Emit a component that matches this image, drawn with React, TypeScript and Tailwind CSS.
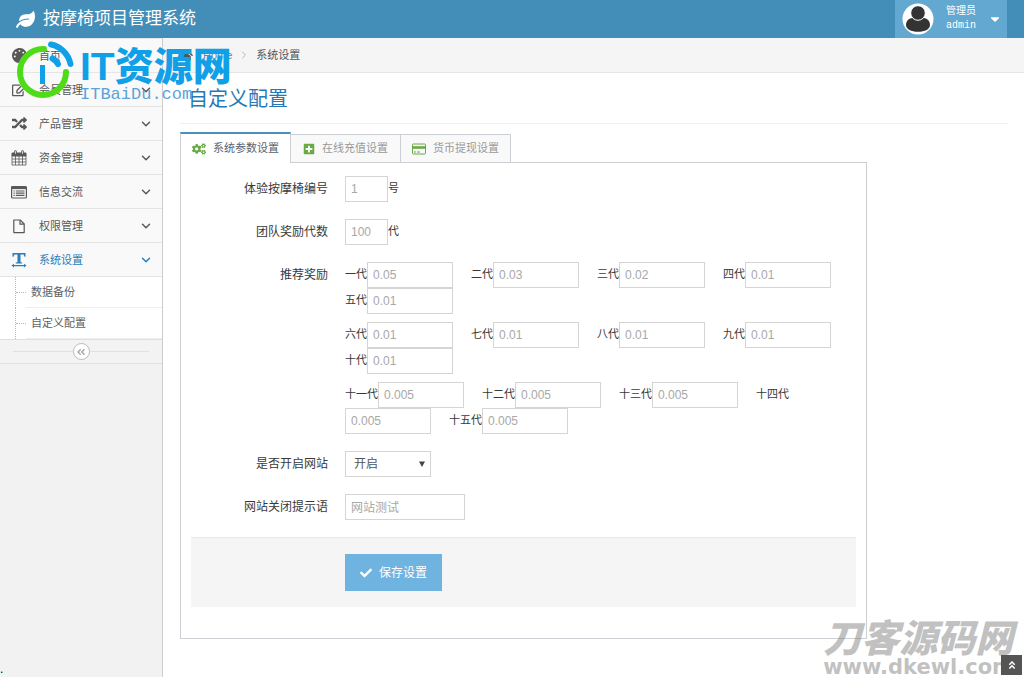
import React, { useState } from 'react';
import { FaLeaf, FaPalette, FaRegEdit, FaRandom, FaHome, FaCogs, FaPlusSquare, FaCheck, FaAngleDoubleLeft, FaAngleDoubleUp, FaCaretDown } from 'react-icons/fa';
import { ChevronDown, ChevronRight } from 'lucide-react';

interface Reward {
  label: string;
  value: string;
}

const rewardGroups: Reward[][] = [
  [
    { label: '一代', value: '0.05' },
    { label: '二代', value: '0.03' },
    { label: '三代', value: '0.02' },
    { label: '四代', value: '0.01' },
    { label: '五代', value: '0.01' },
  ],
  [
    { label: '六代', value: '0.01' },
    { label: '七代', value: '0.01' },
    { label: '八代', value: '0.01' },
    { label: '九代', value: '0.01' },
    { label: '十代', value: '0.01' },
  ],
  [
    { label: '十一代', value: '0.005' },
    { label: '十二代', value: '0.005' },
    { label: '十三代', value: '0.005' },
    { label: '十四代', value: '0.005' },
    { label: '十五代', value: '0.005' },
  ],
];

const CalendarIcon = () => (
  <svg viewBox="0 0 16 16" className="w-4 h-4" fill="none" stroke="currentColor">
    <path d="M1 3h14v3H1z" fill="currentColor" />
    <path d="M1 5.5v9.5h14V5.5M1 9h14M1 12h14M4.5 6v9M8 6v9M11.5 6v9" strokeWidth="0.8" />
    <path d="M4.5 1.500v2M11.5 1.500v2" strokeWidth="2.6" strokeLinecap="round" />
    <path d="M4.5 1.2v2.6M11.5 1.2v2.6" stroke="#f9f9f9" strokeWidth="0.8" />
  </svg>
);

const ListIcon = () => (
  <svg viewBox="0 0 16 16" className="w-4 h-4" fill="none" stroke="currentColor">
    <rect x="0.6" y="2.5" width="14.8" height="11.5" rx="1" strokeWidth="1.2" />
    <path d="M0.6 3.8h14.8" strokeWidth="2.6" />
    <path d="M2.5 7h1.2M2.5 9.2h1.2M2.5 11.4h1.2M4.8 7h8.7M4.8 9.2h8.7M4.8 11.4h8.7" strokeWidth="1.2" />
  </svg>
);

const FileIcon = () => (
  <svg viewBox="0 0 16 16" className="w-4 h-4" fill="none" stroke="currentColor" strokeWidth="1.2">
    <path d="M2.8 2h6.4l4 4v8.6H2.8z" strokeLinejoin="round" />
    <path d="M9 2v4.2h4.2" />
  </svg>
);

const TextWidthIcon = () => (
  <svg viewBox="0 0 16 16" className="w-4 h-4" fill="currentColor">
    <path d="M1.5 1h13v3.8h-1L12.6 2.6H9.5v7.6l1.7.4v.9H4.8v-.9l1.7-.4V2.6H3.4L2.5 4.800h-1z" />
    <path d="M0.5 13.6 3 11.8v1.3h10v-1.3l2.5 1.8-2.5 1.8v-1.2H3v1.2z" />
  </svg>
);

const CardIcon = () => (
  <svg viewBox="0 0 14 12" className="w-3.5 h-3" fill="none" stroke="currentColor">
    <rect x="0.5" y="1" width="13" height="10" rx="0.8" />
    <path d="M0.5 4.5h13" strokeWidth="2.6" />
    <path d="M2 9h2M5 9h3" />
  </svg>
);

const menu = [
  { title: '首页', icon: <FaPalette />, open: false, arrow: false },
  { title: '会员管理', icon: <FaRegEdit />, open: false, arrow: true },
  { title: '产品管理', icon: <FaRandom />, open: false, arrow: true },
  { title: '资金管理', icon: <CalendarIcon />, open: false, arrow: true },
  { title: '信息交流', icon: <ListIcon />, open: false, arrow: true },
  { title: '权限管理', icon: <FileIcon />, open: false, arrow: true },
  { title: '系统设置', icon: <TextWidthIcon />, open: true, arrow: true },
];

const tabs = [
  { title: '系统参数设置', icon: <FaCogs className="w-3.5 h-3.5" /> },
  { title: '在线充值设置', icon: <FaPlusSquare className="w-3 h-3" /> },
  { title: '货币提现设置', icon: <CardIcon /> },
];

const Header = () => (
  <header className="flex h-[38px] justify-between bg-[#438eb9] pr-[17px] text-white">
    <a href="#" className="flex items-center gap-2 pl-4">
      <FaLeaf className="w-[19px] h-[17px]" />
      <span className="text-[17px] leading-6">按摩椅项目管理系统</span>
    </a>
    <button type="button" className="flex w-28 items-center bg-[#62a8d1] pl-[7px] text-left">
      <svg viewBox="0 0 32 32" className="w-8 h-8">
        <circle cx="16" cy="16" r="15.5" fill="#fff" />
        <path d="M4 22c0-4 3-7 6.500-7h11c3.500 0 6.500 3 6.500 7 0 4-5 6.800-12 6.800S4 26 4 22z" fill="#333" />
        <circle cx="16" cy="10" r="7.300" fill="#333" stroke="#fff" strokeWidth="1" />
      </svg>
      <span className="ml-3 w-[38px] font-['Liberation_Mono','Noto_Sans_CJK_SC',monospace] text-[10px] leading-[14px]">
        管理员<br />admin
      </span>
      <FaCaretDown className="ml-1 w-3.5 h-3.5" />
    </button>
  </header>
);

const Sidebar = () => (
  <aside className="w-[163px] shrink-0 border-t border-r border-[#ccc] border-t-[#e5e5e5] bg-[#f2f2f2] text-[11px] leading-4">
    <nav>
      {menu.map((item) => (
        <a
          key={item.title}
          href="#"
          className={`flex h-[34px] items-center border-b border-[#e5e5e5] bg-[#f9f9f9] pl-[11px] pr-[9px] ${item.open ? 'text-[#2b7dbc]' : 'text-[#585858]'}`}
        >
          <span className="flex w-4 justify-center text-[15px]">{item.icon}</span>
          <span className="ml-3 flex-1">{item.title}</span>
          {item.arrow && <ChevronDown className="w-3.5 h-3.5" strokeWidth={2.5} />}
        </a>
      ))}
      <div className="bg-white pl-[15px]">
        {['数据备份', '自定义配置'].map((title) => (
          <a key={title} href="#" className="flex h-[31px] items-center border-l border-dotted border-[#9dbdd6] text-[#616161]">
            <span className="w-2.5 border-t border-dotted border-[#9dbdd6]"></span>
            <span className="flex h-[31px] flex-1 items-center border-b border-[#eee] pl-[5px]">{title}</span>
          </a>
        ))}
      </div>
    </nav>
    <div className="flex h-[25px] items-center border-y border-[#e0e0e0] bg-[#f3f3f3] px-[13px]">
      <span className="h-px flex-1 bg-[#e0e0e0]"></span>
      <button type="button" aria-label="收起菜单" className="flex w-[17px] h-[17px] items-center justify-center rounded-full border border-[#bbb] bg-white text-[#aaa]">
        <FaAngleDoubleLeft className="w-2.5 h-2.5" />
      </button>
      <span className="h-px flex-1 bg-[#e0e0e0]"></span>
    </div>
  </aside>
);

interface FieldProps {
  id: string;
  label: string;
  children: React.ReactNode;
}

const Field: React.FC<FieldProps> = ({ id, label, children }) => (
  <div className="flex items-start gap-[17px]">
    <label htmlFor={id} className="w-[137px] shrink-0 text-right text-xs leading-[26px]">{label}</label>
    <div className="min-w-0 flex-1 text-[11px] leading-6">{children}</div>
  </div>
);

const inputClass = 'h-[26px] border border-[#d5d5d5] bg-white px-[5px] text-xs text-[#a8a8a8] outline-none';

const ConfigForm = () => {
  const [status, setStatus] = useState('开启');

  return (
    <form className="flex flex-col gap-[17px]" onSubmit={(e) => e.preventDefault()}>
      <Field id="chair" label="体验按摩椅编号">
        <div className="flex">
          <input id="chair" className={`w-[43px] ${inputClass}`} defaultValue="1" />
          <span>号</span>
        </div>
      </Field>
      <Field id="team" label="团队奖励代数">
        <div className="flex">
          <input id="team" className={`w-[43px] ${inputClass}`} defaultValue="100" />
          <span>代</span>
        </div>
      </Field>
      <Field id="一代" label="推荐奖励">
        <div className="flex flex-col gap-2">
          {rewardGroups.map((group, i) => (
            <div key={i} className="flex flex-wrap">
              {group.map((r) => (
                <React.Fragment key={r.label}>
                  <label htmlFor={r.label}>{r.label}</label>
                  <input id={r.label} className={`mr-[18px] w-[86px] ${inputClass}`} defaultValue={r.value} />
                </React.Fragment>
              ))}
            </div>
          ))}
        </div>
      </Field>
      <Field id="status" label="是否开启网站">
        <div className="relative w-[86px]">
          <select
            id="status"
            value={status}
            onChange={(e) => setStatus(e.target.value)}
            className="block h-[26px] w-full appearance-none border border-[#d5d5d5] bg-white pl-2 text-xs text-[#555]"
          >
            <option>开启</option>
            <option>关闭</option>
          </select>
          <svg viewBox="0 0 6 6" className="pointer-events-none absolute right-1.5 top-2.5 w-1.5 h-1.5" fill="#444">
            <path d="M0 0.500h6L3 6z" />
          </svg>
        </div>
      </Field>
      <Field id="notice" label="网站关闭提示语">
        <input id="notice" className={`block w-[120px] pb-0.5 ${inputClass}`} defaultValue="网站测试" />
      </Field>
      <div className="border-t border-[#e9e9e9] bg-[#f5f5f5] py-4 pl-[154px]">
        <button type="submit" className="flex h-[37px] w-[97px] items-center justify-center gap-[7px] bg-[#6fb3e0] text-xs text-white">
          <FaCheck className="w-3 h-3" />
          保存设置
        </button>
      </div>
    </form>
  );
};

const SiteLogo = () => (
  <div className="pointer-events-none absolute left-4 top-10 flex text-[#10a0e8]">
    <svg viewBox="0 0 58 60" className="w-[58px] h-[60px] shrink-0" fill="none">
      <path d="M28 9A23 23 0 1 0 50 32" stroke="#4fdc18" strokeWidth="6" strokeLinecap="round" />
      <path d="M35 4.500A25 25 0 0 1 54.500 24" stroke="#10a0e8" strokeWidth="6" strokeLinecap="round" />
      <path d="M36.500 18.500A14 14 0 0 1 42 24" stroke="#10a0e8" strokeWidth="6" strokeLinecap="round" />
      <path d="M26.500 25v19" stroke="#10a0e8" strokeWidth="5" />
    </svg>
    <div className="ml-1.5 whitespace-nowrap">
      <div className="pt-1 text-[39px] font-black leading-[46px]">IT资源网</div>
      <div className="font-['Liberation_Mono',monospace] text-[17px] leading-[10px] text-[#5ba3d8]">ITBaiDu.com</div>
    </div>
  </div>
);

const App: React.FC = () => {
  const [activeTab, setActiveTab] = useState(0);

  return (
    <div className="relative flex min-h-screen flex-col overflow-hidden bg-white font-['Liberation_Sans','Noto_Sans_CJK_SC',sans-serif] text-[#393939]">
      <Header />

      <div className="flex flex-1">
        <Sidebar />

        <main className="min-w-0 flex-1">
          {/* Breadcrumb */}
          <div className="flex h-[35px] items-center border-b border-[#e5e5e5] bg-[#f5f5f5] pl-4 text-[11px] text-[#555]">
            <FaHome className="w-3.5 h-3.5" />
            <a href="#" className="ml-2.5 text-[#4c8fbd]">Home</a>
            <ChevronRight className="mx-1.5 w-3 h-3 text-[#b2b6bf]" />
            <span>系统设置</span>
          </div>

          <div className="pl-[17px] pr-4">
            <h1 className="border-b border-[#f1f1f1] pt-3 pb-2.5 pl-2 text-xl leading-7 text-[#2679b5]">自定义配置</h1>

            <div className="mt-2 w-[83%]">
              {/* Tabs */}
              <div className="flex items-end">
                {tabs.map((tab, i) => (
                  <button
                    key={tab.title}
                    type="button"
                    onClick={() => setActiveTab(i)}
                    className={`flex items-center justify-center gap-[7px] text-[11px] ${
                      i === activeTab
                        ? 'relative -mb-px h-[31px] w-[111px] border-x border-t-2 border-[#ccd0d4] border-t-[#4c8fbd] bg-white text-[#576373]'
                        : 'h-7 w-[110px] border-t border-r border-[#ccd0d4] bg-[#f9f9f9] text-[#999]'
                    }`}
                  >
                    <span className="text-[#69aa46]">{tab.icon}</span>
                    {tab.title}
                  </button>
                ))}
              </div>

              <div className="border border-[#ccd0d4] px-2.5 pt-[13px] pb-[31px]">
                <ConfigForm />
              </div>
            </div>
          </div>
        </main>
      </div>

      <SiteLogo />

      <span className="absolute bottom-0 left-0 text-xs text-black">.</span>

      <div className="pointer-events-none absolute right-2.5 bottom-0 whitespace-nowrap text-[#777] opacity-45">
        <div className="text-[38px] font-black italic leading-9">刀客源码网</div>
        <div className="font-['DejaVu_Sans',sans-serif] text-[21px] font-bold leading-5">www.dkewl.com</div>
      </div>

      <button type="button" aria-label="返回顶部" className="absolute right-0.5 bottom-0.5 flex w-[21px] h-5 items-center justify-center bg-[#555] text-white">
        <FaAngleDoubleUp className="w-2.5 h-2.5" />
      </button>
    </div>
  );
};

export default App;
